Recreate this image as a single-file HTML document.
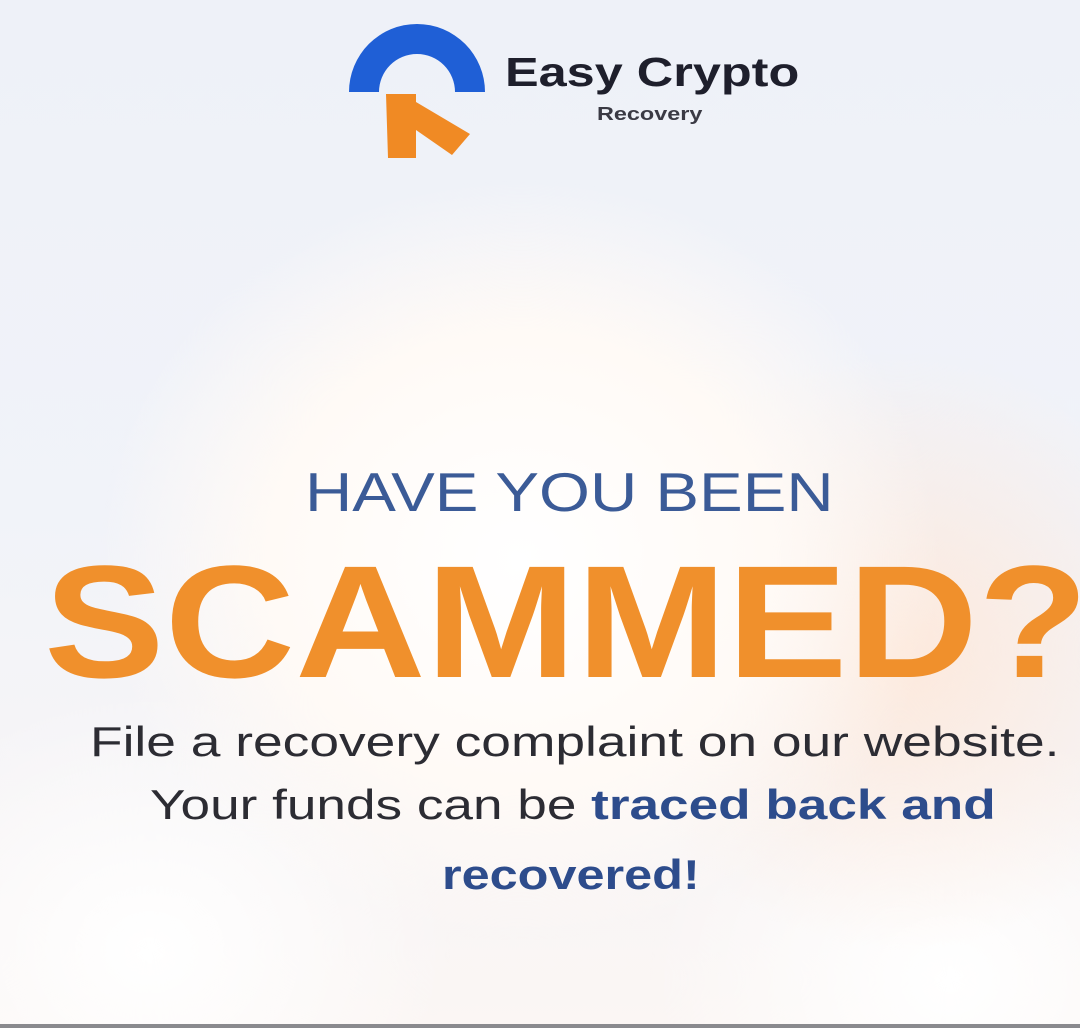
<!DOCTYPE html>
<html><head><meta charset="utf-8"><style>
html,body{margin:0;padding:0}
body{width:1080px;height:1028px;overflow:hidden;position:relative;font-family:"Liberation Sans",sans-serif;
background:
radial-gradient(ellipse 420px 380px at 520px 560px,#ffffff 0%,#fffaf6 60%,rgba(255,245,238,0) 100%),
radial-gradient(ellipse 300px 300px at 900px 650px,#fde9dc 0%,rgba(253,236,225,0) 100%),
radial-gradient(ellipse 300px 260px at 150px 950px,#ffffff 0%,rgba(255,255,255,0) 100%),
radial-gradient(ellipse 300px 260px at 950px 980px,#ffffff 0%,rgba(255,255,255,0) 100%),
linear-gradient(180deg,#eef1f8 0%,#f1f3f9 50%,#fbf6f4 100%);}
.t{position:absolute;white-space:nowrap;transform-origin:0 0}
</style></head><body>
<svg class="t" style="left:340px;top:18px" width="150" height="150" viewBox="340 18 150 150">
<path d="M349 92 A68 68 0 0 1 485 92 L455 92 A38 38 0 0 0 379 92 Z" fill="#1f5fd6"/>
<path d="M386 94 L416 94 L416 102 L470 134 L452 155 L416 130 L416 158 L388 158 Z" fill="#f08a24"/>
</svg>
<div class="t" style="left:505px;top:49px;font-size:41px;font-weight:bold;color:#1e1f2c;transform:scaleX(1.23)">Easy Crypto</div>
<div class="t" style="left:597px;top:104px;font-size:18px;font-weight:bold;color:#3a3a44;transform:scaleX(1.3)">Recovery</div>
<div class="t" style="left:305px;top:460px;font-size:55px;color:#3b5b97;transform:scaleX(1.19)">HAVE YOU BEEN</div>
<div class="t" style="left:44px;top:530px;font-size:160px;font-weight:bold;color:#f0902c;transform:scaleX(1.13)">SCAMMED?</div>
<div class="t" style="left:90px;top:718px;font-size:42px;color:#2c2c33;transform:scaleX(1.27)">File a recovery complaint on our website.</div>
<div class="t" style="left:150px;top:781px;font-size:42px;color:#2c2c33;transform:scaleX(1.265)">Your funds can be <b style="color:#2d4c8c">traced back and</b></div>
<div class="t" style="left:442px;top:851px;font-size:42px;color:#2d4c8c;font-weight:bold;transform:scaleX(1.2)">recovered!</div>
<div style="position:absolute;left:0;top:1024px;width:1080px;height:4px;background:#8a8a8e"></div>
</body></html>
